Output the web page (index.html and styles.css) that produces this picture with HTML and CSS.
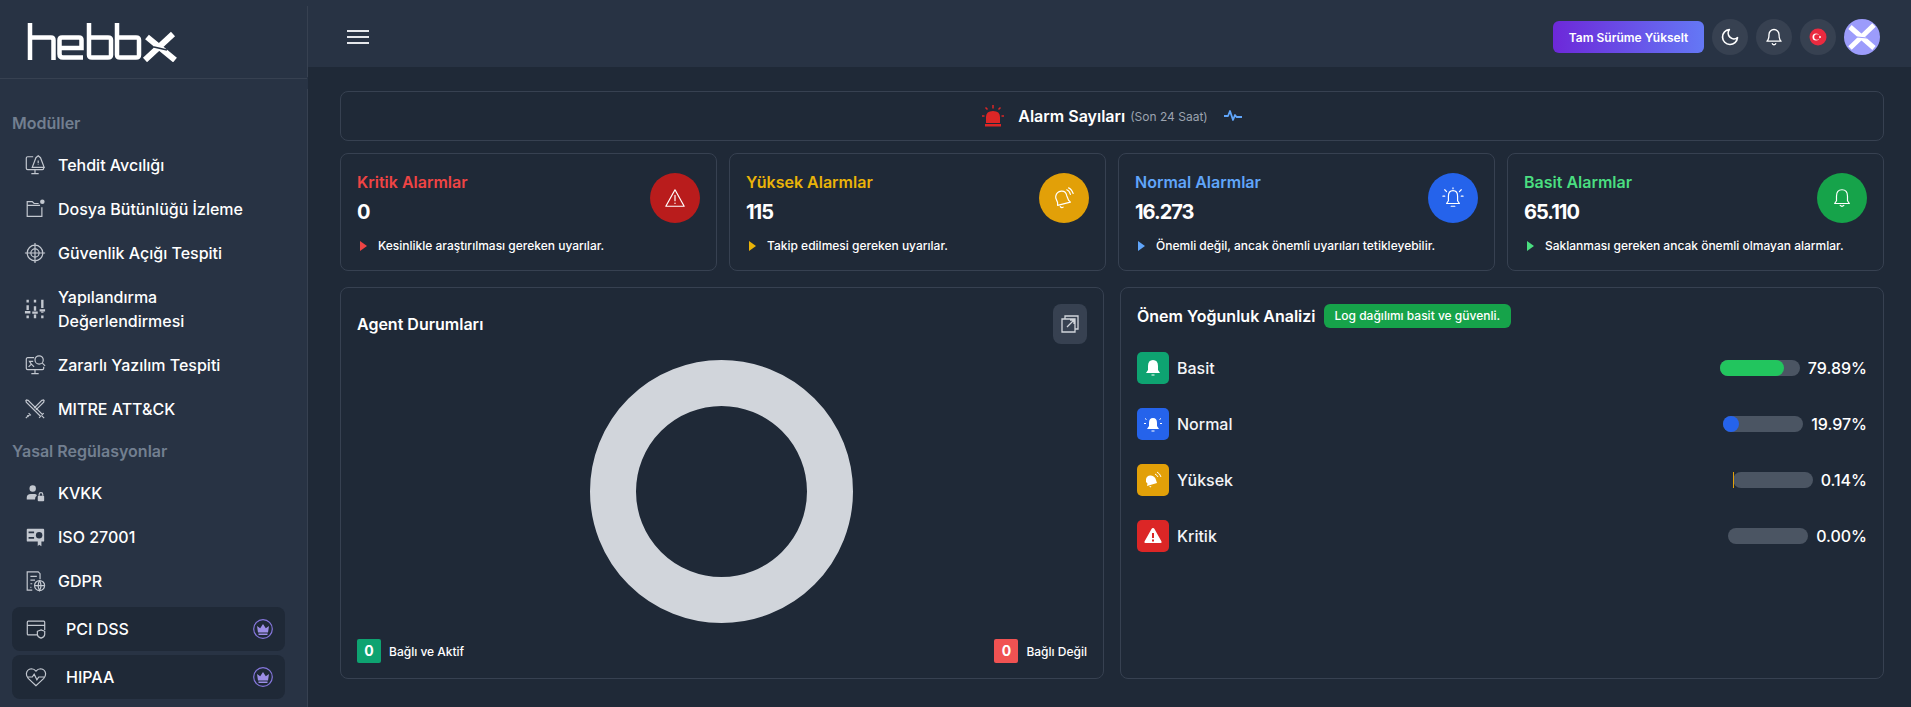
FILE: index.html
```html
<!DOCTYPE html>
<html lang="tr">

<head>
    <meta charset="UTF-8">
    <meta name="viewport" content="width=device-width, initial-scale=1.0">
    <title>Hebbx</title>
    <link rel="stylesheet" href="styles.css">
</head>

<body>
    <aside class="sidebar">
        <div class="logo-row">
            <svg class="logo" width="150" height="40" viewBox="0 0 150 40" fill="none" stroke="#fff" stroke-width="4.500">
                <path d="M3 1V38M3 15.500H24Q26.500 15.500 26.500 18V38"/>
                <path d="M56 35.500H36Q32.500 35.500 32.500 32V18Q32.500 15.500 35 15.500H52Q54.500 15.500 54.500 18V26H32.500"/>
                <path d="M62 1V33Q62 35.500 65 35.500H81Q84 35.500 84 33V18Q84 15.500 81 15.500H62"/>
                <path d="M90 1V33Q90 35.500 93 35.500H109Q112 35.500 112 33V18Q112 15.500 109 15.500H90"/>
                <path stroke-width="6" d="M120 15L148 38M146 12L118 38"/>
                <path stroke="#283344" stroke-width="1.500" d="M127 25L140 28"/>
            </svg>
        </div>
        <nav class="menu">
            <div class="menu-title">Modüller</div>
            <a class="menu-item">
                <svg class="menu-icon" viewBox="0 0 24 24"><path d="M10 3H4a1.500 1.500 0 0 0-1.500 1.500v11A1.500 1.500 0 0 0 4 17h16a1.500 1.500 0 0 0 1.500-1.500V13M12 17v4M8 21.500h8M9 14.500h13L18 4 15.500 2 13 4z"/><path d="M15.500 7v3M15.500 11.500v.5"/></svg>
                <span>Tehdit Avcılığı</span>
            </a>
            <a class="menu-item">
                <svg class="menu-icon" viewBox="0 0 24 24"><path d="M16 6h-5L9 4H3.500v16h16V10M3.500 8h14"/><circle class="solid" cx="20" cy="4" r="2.500"/></svg>
                <span>Dosya Bütünlüğü İzleme</span>
            </a>
            <a class="menu-item">
                <svg class="menu-icon" viewBox="0 0 24 24"><circle cx="12" cy="12" r="8.500"/><circle cx="12" cy="12" r="4.500"/><path d="M12 1v22M1 12h22"/></svg>
                <span>Güvenlik Açığı Tespiti</span>
            </a>
            <a class="menu-item two-line">
                <svg class="menu-icon" viewBox="0 0 24 24"><path class="thick" d="M4 2v3M4 8v5M4 19v3M12 2v3M12 9v5M12 18v4M20 2v9M20 15v1M20 19v3M1 15.500h6M9 16h6M17 13.500h6"/></svg>
                <span>Yapılandırma Değerlendirmesi</span>
            </a>
            <a class="menu-item">
                <svg class="menu-icon" viewBox="0 0 24 24"><path d="M11 4H4a1.500 1.500 0 0 0-1.500 1.500v10A1.500 1.500 0 0 0 4 17h16a1.500 1.500 0 0 0 1.500-1.500V14M12 17v4M8 21.500h8M5 14l3-3-2-3h4M8 11l3 3"/><circle cx="16.500" cy="6.500" r="4.500"/><path d="M20 10l3 3"/></svg>
                <span>Zararlı Yazılım Tespiti</span>
            </a>
            <a class="menu-item">
                <svg class="menu-icon" viewBox="0 0 24 24"><path d="M2 2l2.500.5L20 18l1.500-1.500M2 2l.5 2.500L18 20l-1.500 1.500M19 19l3 3M22 2l-.5 2.500L13 13M22 2l-2.500.5L11 11M5 16.500L7.500 19M3.500 19l1.500 1.500M2 22l3-3 2-1"/></svg>
                <span>MITRE ATT&amp;CK</span>
            </a>
            <div class="menu-title second">Yasal Regülasyonlar</div>
            <a class="menu-item">
                <svg class="menu-icon" viewBox="0 0 24 24"><circle class="solid" cx="9.500" cy="7" r="3.500"/><path class="solid" d="M3 19v-2q0-4 4.500-4h4.500q2 0 2 2-2 1-2 4z"/><rect class="solid" x="15" y="15" width="7" height="6" rx="1"/><path d="M16.500 15v-1.500q0-2 2-2t2 2V15"/></svg>
                <span>KVKK</span>
            </a>
            <a class="menu-item">
                <svg class="menu-icon" viewBox="0 0 24 24"><path class="solid" d="M4 3h17a1 1 0 0 1 1 1v12a1 1 0 0 1-1 1h-2v5l-2.500-1.500L15 22v-5H4a1 1 0 0 1-1-1V4a1 1 0 0 1 1-1z"/><path class="cut" d="M5 6h6v2H5zM5 12h6v2H5z"/><circle class="cut" cx="16.500" cy="10" r="3.500"/></svg>
                <span>ISO 27001</span>
            </a>
            <a class="menu-item">
                <svg class="menu-icon" viewBox="0 0 24 24"><path d="M9 22H3.500V2h12l2 2v6M7 7h7M7 11h5M7 15h2M7 19h1"/><circle cx="17" cy="17" r="5.500"/><path d="M11.500 17h11M17 11.500q-3 5.500 0 11q3-5.500 0-11"/></svg>
                <span>GDPR</span>
            </a>
            <a class="menu-item pro">
                <svg class="menu-icon" viewBox="0 0 24 24"><path d="M21.500 13V4.500a1 1 0 0 0-1-1h-17a1 1 0 0 0-1 1v13a1 1 0 0 0 1 1H13M2.500 8h19M17.500 13l4 1.500V18q0 2.500-4 4q-4-1.500-4-4v-3.500z"/></svg>
                <span>PCI DSS</span>
                <svg class="crown" viewBox="0 0 20 20"><circle cx="10" cy="10" r="9.300" fill="none" stroke="#8576dc" stroke-width="1.200"/><path fill="#9c8ee6" d="M4 7l3.200 2.300L10 5l2.800 4.300L16 7l-1 6.500H5zM5.500 14.500h9V16h-9z"/></svg>
            </a>
            <a class="menu-item pro">
                <svg class="menu-icon" viewBox="0 0 24 24"><path d="M12 21.500L3.500 13.500Q1.500 11.500 1.500 8.500 2 3.500 7 3q3 0 5 2.500Q14 3 17 3q5 .5 5.500 5.500 0 3-2 5zM2.500 12H8l2-3 3 6 2-3h7"/></svg>
                <span>HIPAA</span>
                <svg class="crown" viewBox="0 0 20 20"><circle cx="10" cy="10" r="9.300" fill="none" stroke="#8576dc" stroke-width="1.200"/><path fill="#9c8ee6" d="M4 7l3.200 2.300L10 5l2.800 4.300L16 7l-1 6.500H5zM5.500 14.500h9V16h-9z"/></svg>
            </a>
        </nav>
    </aside>

    <div class="page">
        <header class="topbar">
            <button class="burger"><span></span><span></span><span></span></button>
            <div class="topbar-right">
                <button class="upgrade">Tam Sürüme Yükselt</button>
                <button class="round">
                    <svg width="20" height="20" viewBox="0 0 24 24" fill="none" stroke="#fff" stroke-width="2" stroke-linecap="round" stroke-linejoin="round"><path d="M21 12.800A9 9 0 1 1 11.200 3 7 7 0 0 0 21 12.800z"/></svg>
                </button>
                <button class="round">
                    <svg width="20" height="20" viewBox="0 0 24 24" fill="none" stroke="#fff" stroke-width="1.600" stroke-linecap="round" stroke-linejoin="round"><path d="M12 3a6 6 0 0 0-6 6c0 6-2.500 8-2.500 8h17S18 15 18 9a6 6 0 0 0-6-6zM10 20a2.200 2.200 0 0 0 4 0"/></svg>
                </button>
                <button class="round">
                    <svg width="18" height="18" viewBox="0 0 18 18"><circle cx="9" cy="9" r="8.500" fill="#ea2a3f"/><circle cx="7" cy="9" r="3.500" fill="#fff"/><circle cx="8" cy="9" r="2.800" fill="#ea2a3f"/><circle cx="11" cy="9" r="1" fill="#fff"/></svg>
                </button>
                <div class="avatar">
                    <svg width="36" height="36" viewBox="0 0 36 36" fill="none" stroke="#fff" stroke-width="5"><path d="M6 8l24 21M30 6L6 29"/><path stroke="#9c9cfb" stroke-width="1" d="M13 18l10 1"/></svg>
                </div>
            </div>
        </header>

        <main class="content">
            <div class="box alarm-head">
                <svg width="22" height="22" viewBox="0 0 22 22" fill="#dc2626"><path d="M4 18V12q0-6 7-6t7 6v6zM3 19h16v2.500H3z"/><path d="M11 0v3.500M3.500 2.500l2 2M18.500 2.500l-2 2M0 11h2.500M19.500 11H22" stroke="#dc2626" stroke-width="1.500" fill="none"/></svg>
                <strong>Alarm Sayıları</strong>
                <small>(Son 24 Saat)</small>
                <svg class="pulse" width="18" height="12" viewBox="0 0 18 12" fill="none" stroke="#60a5fa" stroke-width="1.800" stroke-linejoin="round"><path d="M0 6h4l2-5 3 9 2-5 1.500 2H18"/></svg>
            </div>

            <div class="stat-row">
                <div class="box stat">
                    <div class="stat-top">
                        <div>
                            <div class="stat-title red">Kritik Alarmlar</div>
                            <div class="stat-num">0</div>
                        </div>
                        <div class="stat-icon bg-red">
                            <svg viewBox="0 0 24 24"><path d="M12 3L2 21h20zM12 9v6M12 17.500v.5"/></svg>
                        </div>
                    </div>
                    <div class="stat-desc"><i class="arrow c-red"></i>Kesinlikle araştırılması gereken uyarılar.</div>
                </div>
                <div class="box stat">
                    <div class="stat-top">
                        <div>
                            <div class="stat-title yellow">Yüksek Alarmlar</div>
                            <div class="stat-num">115</div>
                        </div>
                        <div class="stat-icon bg-yellow">
                            <svg viewBox="0 0 24 24"><path d="M3 10q1-5 6-5.500t6 5l2 5 2 2-14 3.500 0-3-2-5zM8 21.500q1.500 1.500 3 .5M15 3q3 1 4 5M17 1q3 1 5 6"/></svg>
                        </div>
                    </div>
                    <div class="stat-desc"><i class="arrow c-yellow"></i>Takip edilmesi gereken uyarılar.</div>
                </div>
                <div class="box stat">
                    <div class="stat-top">
                        <div>
                            <div class="stat-title blue">Normal Alarmlar</div>
                            <div class="stat-num">16.273</div>
                        </div>
                        <div class="stat-icon bg-blue">
                            <svg viewBox="0 0 24 24"><path d="M12 4q-5 0-5 6v5l-2 3h14l-2-3v-5q0-6-5-6zM10 21h4M12 1v1M3 3l2 2M21 3l-2 2M1 10h2M21 10h2"/></svg>
                        </div>
                    </div>
                    <div class="stat-desc"><i class="arrow c-blue"></i>Önemli değil, ancak önemli uyarıları tetikleyebilir.</div>
                </div>
                <div class="box stat">
                    <div class="stat-top">
                        <div>
                            <div class="stat-title green">Basit Alarmlar</div>
                            <div class="stat-num">65.110</div>
                        </div>
                        <div class="stat-icon bg-green">
                            <svg viewBox="0 0 24 24"><path d="M12 3q-6 0-6 7v5l-2 3h16l-2-3v-5q0-7-6-7zM10 20q2 2 4 0"/></svg>
                        </div>
                    </div>
                    <div class="stat-desc"><i class="arrow c-green"></i>Saklanması gereken ancak önemli olmayan alarmlar.</div>
                </div>
            </div>

            <div class="panel-row">
                <section class="box panel agent">
                    <div class="agent-head">
                        <h3>Agent Durumları</h3>
                        <button class="expand">
                            <svg width="18" height="18" viewBox="0 0 18 18" fill="none" stroke="#d1d5db" stroke-width="1.300"><path d="M4 4V1h13v13h-3M1 4h13v13H1zM6 12l7-7M9 5h4v4"/></svg>
                        </button>
                    </div>
                    <div class="donut-wrap"><div class="donut"></div></div>
                    <div class="legend">
                        <div class="legend-item"><b class="bg-emerald">0</b>Bağlı ve Aktif</div>
                        <div class="legend-item"><b class="bg-rose">0</b>Bağlı Değil</div>
                    </div>
                </section>

                <section class="box panel density">
                    <div class="density-head">
                        <h3>Önem Yoğunluk Analizi</h3>
                        <span class="pill">Log dağılımı basit ve güvenli.</span>
                    </div>
                    <div class="level">
                        <span class="level-icon bg-emerald"><svg viewBox="0 0 20 20"><path d="M10 2q-5 0-5 6v4l-2 3h14l-2-3V8q0-6-5-6zM8.500 16.500h3v1h-3z"/></svg></span>
                        <span class="level-name">Basit</span>
                        <span class="track"><span class="fill c-fill-green" style="width: 80%"></span></span>
                        <span class="level-pct">79.89%</span>
                    </div>
                    <div class="level">
                        <span class="level-icon bg-blue"><svg viewBox="0 0 20 20"><path d="M10 4q-4 0-4 5v3l-2 3h12l-2-3V9q0-5-4-5zM8.500 16.500h3v1h-3z"/><path class="line" d="M2 4.500l1.500 1M18 4.500l-1.500 1M1 9.500h2M17 9.500h2"/></svg></span>
                        <span class="level-name">Normal</span>
                        <span class="track"><span class="fill c-fill-blue" style="width: 20%"></span></span>
                        <span class="level-pct">19.97%</span>
                    </div>
                    <div class="level">
                        <span class="level-icon bg-yellow"><svg viewBox="0 0 20 20"><path d="M3 9q1-4 5-3.500t5 4.500l1 3-10 3 .5-2.500L3 12zM6 16.500l2.500-.5-1 1.500z"/><path class="line" d="M12 4q2 1 3 3M14 2q3 1.500 4 5"/></svg></span>
                        <span class="level-name">Yüksek</span>
                        <span class="track"><span class="fill c-fill-yellow" style="width: 1px"></span></span>
                        <span class="level-pct">0.14%</span>
                    </div>
                    <div class="level">
                        <span class="level-icon bg-crit"><svg viewBox="0 0 20 20"><path d="M10 2q1 0 1.500 1l7 12.500q.5 1.500-1 1.500h-15q-1.500 0-1-1.500l7-12.500Q9 2 10 2z"/><path class="mark" d="M9 7h2v5H9zM9 13.500h2v2H9z"/></svg></span>
                        <span class="level-name">Kritik</span>
                        <span class="track"></span>
                        <span class="level-pct">0.00%</span>
                    </div>
                </section>
            </div>
        </main>
    </div>
</body>

</html>
```

FILE: styles.css
```css
* {
  box-sizing: border-box;
}
html, body {
  height: 100%;
}
body {
  margin: 0;
  display: flex;
  height: 707px;
  overflow: hidden;
  font-family: Inter, 'Noto Sans', Arial, sans-serif;
  background-color: #1f2937;
  color: #fff;
}
button {
  font-family: inherit;
  border: none;
  cursor: pointer;
}
.sidebar {
  width: 308px;
  flex-shrink: 0;
  background-color: #283344;
  border-right: 1px solid transparent;
  border-image: linear-gradient(to bottom, transparent 7px, #374151 7px, #374151 78px, transparent 78px, transparent 90px, #374151 90px) 1;
  overflow: hidden;
}
.logo-row {
  height: 79px;
  padding: 22px 0 0 27px;
  border-bottom: 1px solid #374151;
}
.logo {
  display: block;
}
.menu {
  padding: 34px 0 0 12px;
  width: 285px;
}
.menu-title {
  font-size: 16px;
  line-height: 20px;
  font-weight: 600;
  color: #727f90;
  margin-bottom: 10px;
}
.menu-title.second {
  margin: 10px 0;
}
.menu-item {
  display: flex;
  align-items: center;
  height: 44px;
  padding-left: 12px;
  font-size: 16px;
  line-height: 24px;
  font-weight: 500;
}
.menu-item span {
  width: 190px;
}
.menu-item.two-line {
  height: 68px;
}
.menu-icon {
  width: 22px;
  height: 22px;
  margin-right: 12px;
  flex-shrink: 0;
  fill: none;
  stroke: #c3c8d0;
  stroke-width: 1.300;
}
.menu-icon .thick {
  stroke-width: 2.600;
}
.menu-icon .solid {
  fill: #c3c8d0;
  stroke: none;
}
.menu-icon .cut {
  fill: #283344;
  stroke: none;
}
.menu-item.pro {
  margin-top: 4px;
  padding: 0 12px 0 13px;
  background-color: #1f2937;
  border-radius: 8px;
}
.menu-item.pro .menu-icon {
  margin-right: 19px;
}
.crown {
  width: 20px;
  height: 20px;
  margin-left: auto;
  flex-shrink: 0;
}
.page {
  flex: 1;
  min-width: 0;
}
.topbar {
  height: 67px;
  background-color: #283344;
  display: flex;
  justify-content: space-between;
  padding: 19px 31px 0 39px;
}
.burger {
  width: 22px;
  height: 36px;
  padding: 0;
  background: none;
  display: flex;
  flex-direction: column;
  justify-content: center;
  gap: 4px;
}
.burger span {
  display: block;
  height: 2px;
  background-color: #e5e7eb;
}
.topbar-right {
  display: flex;
  gap: 8px;
  height: 36px;
}
.upgrade {
  height: 32px;
  margin-top: 2px;
  width: 151px;
  padding: 0;
  color: #fff;
  font-size: 12px;
  font-weight: 600;
  border-radius: 6px;
  background: linear-gradient(to right, #6d28d9, #6478f5);
}
.round {
  width: 36px;
  height: 36px;
  padding: 0;
  border-radius: 50%;
  background-color: #374151;
  display: flex;
  align-items: center;
  justify-content: center;
}
.avatar {
  width: 36px;
  height: 36px;
  border-radius: 50%;
  overflow: hidden;
  background-color: #9c9cfb;
}
.avatar svg {
  display: block;
}
.content {
  padding: 24px 27px 0 32px;
}
.box {
  background-color: #1f2937;
  border: 1px solid #374151;
  border-radius: 8px;
}
.alarm-head {
  height: 50px;
  display: flex;
  align-items: center;
  justify-content: center;
  margin-bottom: 12px;
}
.alarm-head strong {
  font-size: 16px;
  font-weight: 600;
  margin-left: 14px;
}
.alarm-head small {
  font-size: 12px;
  color: #9ca3af;
  margin-left: 5px;
}
.pulse {
  margin-left: 16px;
}
.stat-row {
  display: grid;
  grid-template-columns: repeat(4, 1fr);
  gap: 12px;
  margin-bottom: 16px;
}
.stat {
  height: 118px;
  padding: 16px 16px 0;
}
.stat-top {
  display: flex;
  justify-content: space-between;
}
.stat-title {
  font-size: 16px;
  line-height: 24px;
  font-weight: 600;
  margin-bottom: 4px;
}
.stat-num {
  font-size: 20px;
  line-height: 28px;
  font-weight: 700;
  letter-spacing: -1px;
}
.stat-icon {
  width: 50px;
  height: 50px;
  margin-top: 3px;
  border-radius: 50%;
  display: flex;
  align-items: center;
  justify-content: center;
}
.stat-icon svg {
  width: 22px;
  height: 22px;
  fill: none;
  stroke: #fff;
  stroke-width: 1.300;
  stroke-linejoin: round;
  stroke-linecap: round;
}
.stat-desc {
  display: flex;
  align-items: center;
  font-size: 12px;
  line-height: 16px;
  font-weight: 500;
  margin-top: 12px;
}
.arrow {
  width: 0;
  height: 0;
  margin: 0 11px 0 3px;
  border-style: solid;
  border-width: 5px 0 5px 7px;
  border-color: transparent;
}
.arrow.c-red { border-left-color: #ef4444; }
.arrow.c-yellow { border-left-color: #eab308; }
.arrow.c-blue { border-left-color: #60a5fa; }
.arrow.c-green { border-left-color: #4ade80; }
.red { color: #ef4444; }
.yellow { color: #eab308; }
.blue { color: #60a5fa; }
.green { color: #4ade80; }
.bg-red { background-color: #b91c1c; }
.bg-yellow { background-color: #e2a008; }
.bg-blue { background-color: #2563eb; }
.bg-green { background-color: #16a34a; }
.bg-emerald { background-color: #0ea371; }
.bg-rose { background-color: #f05252; }
.bg-crit { background-color: #dc2626; }
.panel-row {
  display: grid;
  grid-template-columns: 1fr 1fr;
  gap: 16px;
}
.panel {
  height: 392px;
  padding: 16px 16px 0;
}
.panel h3 {
  margin: 0;
  font-size: 16px;
  font-weight: 600;
}
.agent-head {
  display: flex;
  justify-content: space-between;
  align-items: center;
  height: 40px;
}
.expand {
  width: 34px;
  height: 40px;
  padding: 0;
  border-radius: 8px;
  background-color: #374151;
  display: flex;
  align-items: center;
  justify-content: center;
}
.donut-wrap {
  display: flex;
  justify-content: center;
  padding-right: 2px;
  margin-top: 16px;
}
.donut {
  width: 263px;
  height: 263px;
  border-radius: 50%;
  border: 46px solid #d1d5db;
}
.legend {
  display: flex;
  justify-content: space-between;
  margin-top: 16px;
}
.legend-item {
  display: flex;
  align-items: center;
  font-size: 12px;
  font-weight: 500;
}
.legend-item b {
  width: 24px;
  height: 24px;
  line-height: 24px;
  text-align: center;
  font-size: 14px;
  border-radius: 2px;
  margin-right: 8px;
}
.density-head {
  display: flex;
  align-items: center;
  gap: 8px;
  height: 24px;
  margin-bottom: 24px;
}
.pill {
  font-size: 12px;
  font-weight: 500;
  line-height: 24px;
  padding: 0 11px;
  border-radius: 6px;
  background-color: #16a34a;
}
.level {
  display: flex;
  align-items: center;
  height: 32px;
  margin-bottom: 24px;
}
.level-icon {
  width: 32px;
  height: 32px;
  border-radius: 5px;
  margin-right: 8px;
  display: flex;
  align-items: center;
  justify-content: center;
}
.level-icon svg {
  width: 20px;
  height: 20px;
  fill: #fff;
}
.level-icon .line {
  fill: none;
  stroke: #fff;
  stroke-width: 1;
}
.level-icon .mark {
  fill: #dc2626;
}
.level-name {
  font-size: 16px;
  font-weight: 500;
  color: #f3f4f6;
  margin-right: auto;
}
.track {
  display: block;
  width: 80px;
  height: 16px;
  border-radius: 8px;
  background-color: #4b5563;
  margin-right: 8px;
}
.fill {
  display: block;
  height: 100%;
  border-radius: 8px;
}
.c-fill-green { background-color: #22c55e; }
.c-fill-blue { background-color: #2563eb; }
.c-fill-yellow { background-color: #e2a008; border-radius: 0; }
.level-pct {
  font-size: 16px;
  font-weight: 500;
}
```
